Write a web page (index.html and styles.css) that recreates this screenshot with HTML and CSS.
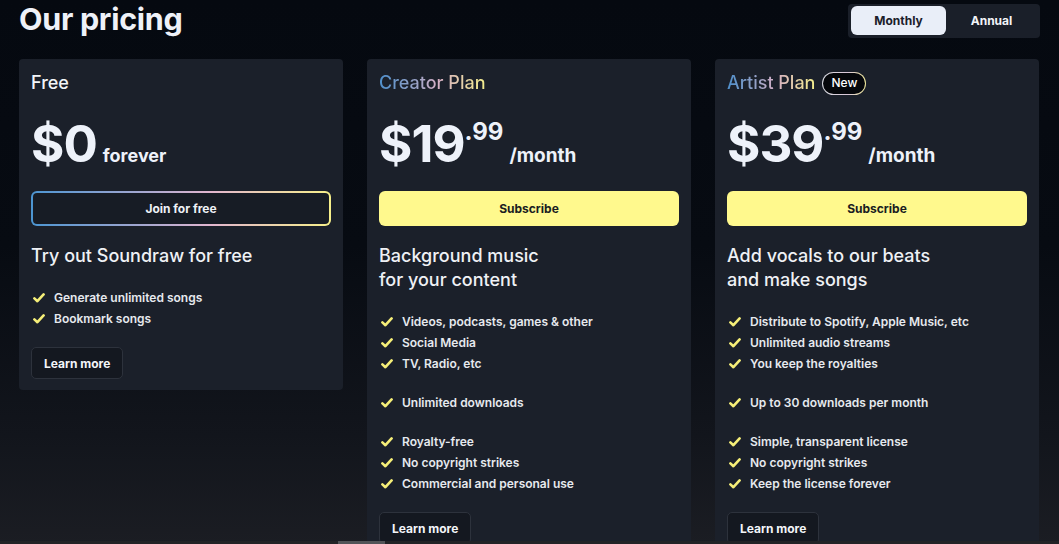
FILE: index.html
```html
<!DOCTYPE html>
<html lang="en">
<head>
<meta charset="utf-8">
<title>Our pricing</title>
<link rel="stylesheet" href="styles.css">
</head>
<body>
<main class="page">
  <header class="top">
    <h1 class="title">Our pricing</h1>
    <div class="toggle">
      <button class="tab tab-active">Monthly</button>
      <button class="tab">Annual</button>
    </div>
  </header>
  <section class="cards">
    <article class="card">
      <h2 class="plan plan-free">Free</h2>
      <div class="price"><span class="amount">$0</span><span class="per per-free">forever</span></div>
      <button class="btn btn-outline">Join for free</button>
      <h3 class="lead">Try out Soundraw for free</h3>
      <ul class="features">
        <li class="group">
          <div class="feat"><svg class="check" viewBox="0 0 12 10"><path d="M1.4 5.4 4.4 8.2 10.6 1.4"/></svg>Generate unlimited songs</div>
          <div class="feat"><svg class="check" viewBox="0 0 12 10"><path d="M1.4 5.4 4.4 8.2 10.6 1.4"/></svg>Bookmark songs</div>
        </li>
      </ul>
      <button class="btn-more">Learn more</button>
    </article>
    <article class="card">
      <h2 class="plan"><span class="grad">Creator Plan</span></h2>
      <div class="price"><span class="amount">$19</span><span class="cents">.99</span><span class="per">/month</span></div>
      <button class="btn btn-yellow">Subscribe</button>
      <h3 class="lead">Background music<br>for your content</h3>
      <ul class="features">
        <li class="group">
          <div class="feat"><svg class="check" viewBox="0 0 12 10"><path d="M1.4 5.4 4.4 8.2 10.6 1.4"/></svg>Videos, podcasts, games &amp; other</div>
          <div class="feat"><svg class="check" viewBox="0 0 12 10"><path d="M1.4 5.4 4.4 8.2 10.6 1.4"/></svg>Social Media</div>
          <div class="feat"><svg class="check" viewBox="0 0 12 10"><path d="M1.4 5.4 4.4 8.2 10.6 1.4"/></svg>TV, Radio, etc</div>
        </li>
        <li class="group">
          <div class="feat"><svg class="check" viewBox="0 0 12 10"><path d="M1.4 5.4 4.4 8.2 10.6 1.4"/></svg>Unlimited downloads</div>
        </li>
        <li class="group">
          <div class="feat"><svg class="check" viewBox="0 0 12 10"><path d="M1.4 5.4 4.4 8.2 10.6 1.4"/></svg>Royalty-free</div>
          <div class="feat"><svg class="check" viewBox="0 0 12 10"><path d="M1.4 5.4 4.4 8.2 10.6 1.4"/></svg>No copyright strikes</div>
          <div class="feat"><svg class="check" viewBox="0 0 12 10"><path d="M1.4 5.4 4.4 8.2 10.6 1.4"/></svg>Commercial and personal use</div>
        </li>
      </ul>
      <button class="btn-more">Learn more</button>
    </article>
    <article class="card">
      <h2 class="plan"><span class="grad">Artist Plan</span><span class="badge">New</span></h2>
      <div class="price"><span class="amount">$39</span><span class="cents">.99</span><span class="per">/month</span></div>
      <button class="btn btn-yellow">Subscribe</button>
      <h3 class="lead">Add vocals to our beats<br>and make songs</h3>
      <ul class="features">
        <li class="group">
          <div class="feat"><svg class="check" viewBox="0 0 12 10"><path d="M1.4 5.4 4.4 8.2 10.6 1.4"/></svg>Distribute to Spotify, Apple Music, etc</div>
          <div class="feat"><svg class="check" viewBox="0 0 12 10"><path d="M1.4 5.4 4.4 8.2 10.6 1.4"/></svg>Unlimited audio streams</div>
          <div class="feat"><svg class="check" viewBox="0 0 12 10"><path d="M1.4 5.4 4.4 8.2 10.6 1.4"/></svg>You keep the royalties</div>
        </li>
        <li class="group">
          <div class="feat"><svg class="check" viewBox="0 0 12 10"><path d="M1.4 5.4 4.4 8.2 10.6 1.4"/></svg>Up to 30 downloads per month</div>
        </li>
        <li class="group">
          <div class="feat"><svg class="check" viewBox="0 0 12 10"><path d="M1.4 5.4 4.4 8.2 10.6 1.4"/></svg>Simple, transparent license</div>
          <div class="feat"><svg class="check" viewBox="0 0 12 10"><path d="M1.4 5.4 4.4 8.2 10.6 1.4"/></svg>No copyright strikes</div>
          <div class="feat"><svg class="check" viewBox="0 0 12 10"><path d="M1.4 5.4 4.4 8.2 10.6 1.4"/></svg>Keep the license forever</div>
        </li>
      </ul>
      <button class="btn-more">Learn more</button>
    </article>
  </section>
</main>
<div class="scrollbar"><div class="thumb"></div></div>
</body>
</html>
```
FILE: styles.css
```css
* { box-sizing: border-box; }
html, body { margin: 0; height: 544px; overflow: hidden; }
body {
  font-family: Inter, "Noto Sans", sans-serif;
  color: #eef1f6;
  background: linear-gradient(180deg, #050910 0%, #070b12 45%, #12151c 80%, #1b1d23 100%);
}
.page { padding: 0 19px 0 19px; }
.top {
  display: flex;
  justify-content: space-between;
  align-items: flex-start;
  height: 59px;
}
.title {
  margin: 0;
  font-size: 30.5px;
  font-weight: 700;
  line-height: 38px;
  letter-spacing: -0.3px;
  color: #eef1f8;
}
.toggle {
  margin-top: 4px;
  display: flex;
  width: 192px;
  height: 34px;
  padding: 2px 3px;
  background: #1a1f29;
  border-radius: 4px;
}
.tab {
  flex: 1;
  border: 0;
  background: transparent;
  font-family: inherit;
  font-size: 12px;
  font-weight: 700;
  color: #f2f4f8;
  border-radius: 6px;
  padding: 0;
  height: 29px;
}
.tab-active { background: #e9eef8; color: #1b202a; flex: 0 0 95px; }
.cards {
  display: grid;
  grid-template-columns: repeat(3, 324px);
  gap: 24px;
  align-items: start;
}
.card {
  background: #1b202a;
  border-radius: 4px;
  padding: 12px 12px 11px;
  display: flex;
  flex-direction: column;
  align-items: flex-start;
}
.plan {
  margin: 0;
  font-size: 18px;
  font-weight: 500;
  line-height: 24px;
  display: flex;
  align-items: center;
  gap: 7px;
}
.plan-free { color: #f3f5f8; }
.grad {
  background: linear-gradient(90deg, #4e8fcb 0%, #9aa3c7 35%, #d7b0c6 55%, #f3ee8c 100%);
  -webkit-background-clip: text;
  background-clip: text;
  color: transparent;
}
.badge {
  display: inline-flex;
  align-items: center;
  height: 23px;
  padding: 0 8px;
  font-size: 12px;
  font-weight: 500;
  color: #ffffff;
  border-radius: 12px;
  border: 1.5px solid transparent;
  background: linear-gradient(#05070b, #05070b) padding-box,
              linear-gradient(90deg, #d9dbe2, #d8c6d6 60%, #f0e99a) border-box;
}
.price {
  margin-top: 19px;
  line-height: 60px;
  height: 60px;
  white-space: nowrap;
  font-weight: 700;
}
.amount { font-size: 51px; letter-spacing: -1px; color: #eef2fa; }
.cents { font-size: 24px; line-height: 0; vertical-align: 22px; color: #eef2fa; letter-spacing: 0; }
.per { font-size: 19px; margin-left: 6px; color: #eef2fa; }
.per-free { margin-left: 6px; font-size: 18px; }
.btn {
  margin-top: 17px;
  width: 100%;
  height: 35px;
  border-radius: 6px;
  font-family: inherit;
  font-size: 12px;
  font-weight: 700;
  padding: 0;
}
.btn-outline {
  color: #eef1f6;
  border: 2px solid transparent;
  background: linear-gradient(#171c25, #171c25) padding-box,
              linear-gradient(90deg, #4c95d2 0%, #9fa6d0 35%, #e2b6cf 60%, #f6ef8a 100%) border-box;
}
.btn-yellow { border: 0; background: #fff98d; color: #1a1d22; }
.lead {
  margin: 18px 0 0;
  font-size: 18px;
  font-weight: 500;
  line-height: 24px;
  color: #eff1f5;
}
.features { list-style: none; margin: 19px 0 0; padding: 0; display: flex; flex-direction: column; gap: 18px; }
.feat {
  display: flex;
  align-items: center;
  gap: 9px;
  font-size: 12px;
  font-weight: 600;
  line-height: 21px;
  color: #e6e9ee;
  padding-left: 2px;
}
.check { width: 12px; height: 10px; flex: none; }
.check path { fill: none; stroke: #f5ee78; stroke-width: 2.6; stroke-linecap: round; stroke-linejoin: round; }
.btn-more {
  margin-top: 18px;
  height: 32px;
  padding: 0 12px;
  border-radius: 5px;
  border: 1px solid #2d323c;
  background: #141820;
  color: #f3f5f8;
  font-family: inherit;
  font-size: 12px;
  font-weight: 700;
}
.scrollbar {
  position: fixed;
  left: 0;
  right: 0;
  bottom: 0;
  height: 3px;
  background: #222326;
}
.thumb { margin-left: 338px; width: 47px; height: 3px; background: #525458; }
```
